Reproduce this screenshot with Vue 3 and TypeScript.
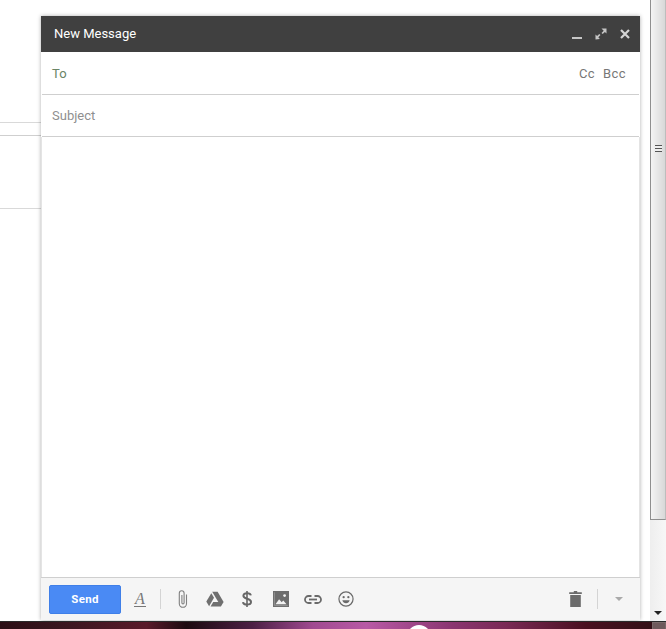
<script setup lang="ts">
const tools = ['paperclip', 'drive', 'dollar', 'photo', 'link', 'smile']
</script>

<template>
  <div class="page">
    <div class="stage">
      <div class="behind">
        <div class="rule rule-a"></div>
        <div class="rule rule-b"></div>
        <div class="rule rule-c"></div>
      </div>
      <section class="compose">
        <header class="head">
          <span class="title">New Message</span>
          <div class="win-btns">
            <svg width="12" height="12" viewBox="0 0 12 12"><rect x="1" y="9" width="10" height="2" fill="#c6c6c6" /></svg>
            <svg width="12" height="12" viewBox="0 0 12 12" fill="#c6c6c6">
              <path d="M6.5 0.5h5v5l-1.6-1.6-2.2 2.2-1.2-1.2 2.2-2.2z" />
              <path d="M0.5 11.5v-5l1.6 1.6 2.2-2.2 1.2 1.2-2.2 2.2 1.6 1.6z" />
            </svg>
            <svg width="12" height="12" viewBox="0 0 12 12"><path d="M2 2l8 8M10 2l-8 8" stroke="#d4d4d4" stroke-width="2.2" fill="none" /></svg>
          </div>
        </header>
        <div class="row to-row">
          <span class="to">To</span>
          <span class="cc">Cc</span>
          <span class="bcc">Bcc</span>
        </div>
        <div class="row subject-row">
          <span class="subject">Subject</span>
        </div>
        <div class="body"></div>
        <footer class="toolbar">
          <button class="send">Send</button>
          <span class="format">A</span>
          <span class="sep"></span>
          <div class="tools">
            <span v-for="t in tools" :key="t" :class="['tool', 'tool-' + t]">
              <svg v-if="t === 'paperclip'" width="14" height="20" viewBox="0 0 14 20" fill="none" stroke="#808080" stroke-width="1.1">
                <path d="M10.5 5.5v9.2a3.6 3.6 0 0 1-7.2 0V4.2a2.4 2.4 0 0 1 4.8 0v9.6a1.1 1.1 0 0 1-2.2 0V6" />
              </svg>
              <svg v-else-if="t === 'drive'" width="18" height="16" viewBox="0 0 18 16" fill="#6f6f6f">
                <path d="M6.2 0.8h5.4l6 10.2h-5.3z" />
                <path d="M5.3 2.2l2.7 4.6-4.9 8.4-2.8-4.6z" />
                <path d="M7.2 11h10.4l-2.7 4.4H4.6z" />
              </svg>
              <svg v-else-if="t === 'dollar'" width="12" height="18" viewBox="0 0 12 18" fill="none" stroke="#666" stroke-width="2">
                <path d="M6 1v16" stroke-width="1.6" />
                <path d="M9.8 5.4C9.6 4 8.2 3.3 6 3.3 3.8 3.3 2.4 4.2 2.4 5.8c0 3.8 7.6 2.2 7.6 6.2C10 13.6 8.3 14.6 6 14.6c-2.3 0-3.8-.9-4-2.5" />
              </svg>
              <svg v-else-if="t === 'photo'" width="16" height="16" viewBox="0 0 16 16">
                <path d="M0 0h16v16H0z" fill="#6d6d6d" />
                <path d="M1.3 1.3h.1v13.3h13.3" fill="none" stroke="#9a9a9a" stroke-width="0.8" />
                <circle cx="11.6" cy="4.6" r="1.4" fill="#f2f2f2" />
                <path d="M2.5 13.2l3.6-5 2.6 3 1.6-1.7 3.2 3.7z" fill="#f2f2f2" />
              </svg>
              <svg v-else-if="t === 'link'" width="18" height="9" viewBox="0 0 18 9" fill="none" stroke="#6a6a6a" stroke-width="1.8">
                <path d="M7.5 1H4.5a3.5 3.5 0 0 0 0 7h3" />
                <path d="M10.5 1h3a3.5 3.5 0 0 1 0 7h-3" />
                <path d="M5 4.5h8" />
              </svg>
              <svg v-else width="16" height="16" viewBox="0 0 17 17">
                <circle cx="8.5" cy="8.5" r="7.5" fill="none" stroke="#6a6a6a" stroke-width="1.3" />
                <circle cx="6" cy="6.6" r="1.2" fill="#6a6a6a" />
                <circle cx="11" cy="6.6" r="1.2" fill="#6a6a6a" />
                <path d="M4.6 9.8h7.8c-.5 2-2 3.2-3.9 3.2s-3.4-1.2-3.9-3.2z" fill="#6a6a6a" />
              </svg>
            </span>
          </div>
          <svg class="trash" width="13" height="16" viewBox="0 0 13 16" fill="#6b6b6b">
            <path d="M4.8 0h3.4v1.3h4.6v1.8H.2V1.3h4.6z" />
            <path d="M1.2 4h10.6v12H1.2z" />
          </svg>
          <span class="sep sep-right"></span>
          <span class="more"></span>
        </footer>
      </section>
      <div class="gutter"></div>
      <aside class="scrollbar">
        <div class="thumb"><span class="grip"></span></div>
        <span class="down"></span>
      </aside>
    </div>
    <div class="taskbar">
      <span class="orb"></span>
      <span class="tray"></span>
    </div>
  </div>
</template>

<style scoped>
.page {
  width: 666px;
  height: 629px;
  overflow: hidden;
  background: #fff;
  font-family: Roboto, "Liberation Sans", sans-serif;
  display: flex;
  flex-direction: column;
}
.stage {
  flex: 0 0 621px;
  display: flex;
  position: relative;
}
.behind {
  flex: 0 0 41px;
  display: flex;
  flex-direction: column;
}
.rule { height: 1px; background: #d9d9d9; }
.rule-a { margin-top: 122px; }
.rule-b { margin-top: 12px; background: #cfcfcf; }
.rule-c { margin-top: 72px; }
.compose {
  flex: 0 0 599px;
  height: 604px;
  margin-top: 16px;
  display: flex;
  flex-direction: column;
  box-shadow: 0 0 4px rgba(0, 0, 0, 0.32);
  background: #fff;
}
.head {
  flex: 0 0 36px;
  background: #404040;
  display: flex;
  align-items: center;
  justify-content: space-between;
  padding: 0 9px 2px 13px;
  box-sizing: border-box;
}
.title { color: #fff; font-size: 13px; }
.win-btns { display: flex; gap: 12px; align-items: center; padding-top: 2px; }
.row {
  display: flex;
  align-items: center;
  margin-left: 1px;
  margin-right: 1px;
  border-bottom: 1px solid #cfcfcf;
  padding: 0 13px 0 10px;
  font-size: 13px;
  box-sizing: border-box;
}
.to-row { flex: 0 0 43px; }
.subject-row { flex: 0 0 42px; }
.to { color: #6a8566; flex: 1; }
.cc { color: #777; margin-right: 8px; letter-spacing: 0.4px; }
.bcc { color: #777; letter-spacing: 0.4px; }
.subject { color: #8f8f8f; }
.body { flex: 1; border-left: 1px solid #e4e4e4; border-right: 1px solid #e4e4e4; }
.toolbar {
  flex: 0 0 43px;
  box-sizing: border-box;
  background: #f5f5f5;
  border-top: 1px solid #cfcfcf;
  display: flex;
  align-items: center;
  padding: 0 14px 0 8px;
}
.send {
  width: 72px;
  height: 29px;
  padding: 0;
  border: 1px solid #3f7fe8;
  border-radius: 2px;
  background: #4a8af4;
  color: #fff;
  font-family: inherit;
  font-size: 11.5px;
  font-weight: 700;
  letter-spacing: 0.3px;
}
.format {
  margin-left: 13px;
  width: 12px;
  font-family: "Liberation Serif", serif;
  font-style: italic;
  font-size: 16px;
  line-height: 15px;
  color: #777;
  border-bottom: 1px solid #777;
  text-align: center;
}
.sep { width: 1px; height: 20px; background: #d4d4d4; margin-left: 14px; }
.tools { display: flex; align-items: center; margin-left: 4px; flex: 1; }
.tool { display: flex; align-items: center; justify-content: center; box-sizing: border-box; width: 33px; height: 20px; }
.tool-paperclip { padding-left: 2px; }
.tool-dollar { margin-left: -1px; }
.tool-photo { margin-left: 1px; }
.tool-link { margin-left: -1px; }
.trash { margin-right: 15px; }
.sep-right { margin-left: 0; margin-right: 17px; }
.more {
  width: 0;
  height: 0;
  margin-right: 3px;
  border: 4px solid transparent;
  border-top: 4px solid #aaa;
  border-bottom: 0;
}
.gutter { flex: 0 0 10px; }
.scrollbar {
  flex: 0 0 16px;
  background: linear-gradient(90deg, #eee, #f7f7f7);
  display: flex;
  flex-direction: column;
  align-items: center;
  justify-content: space-between;
  padding-bottom: 6px;
  box-sizing: border-box;
}
.thumb {
  width: 16px;
  height: 520px;
  box-sizing: border-box;
  border-left: 1px solid #8f8f8f;
  border-right: 1px solid #bdbdbd;
  border-bottom: 1px solid #8f8f8f;
  background: linear-gradient(90deg, #f4f4f4, #d8d8d8);
  display: flex;
  justify-content: center;
  padding-top: 145px;
}
.grip {
  width: 7px;
  height: 7px;
  background: repeating-linear-gradient(180deg, #555 0 1px, #eee 1px 3px);
}
.down {
  width: 0;
  height: 0;
  border: 4px solid transparent;
  border-top: 4px solid #222;
  border-bottom: 0;
}
.taskbar {
  flex: 1;
  position: relative;
  overflow: hidden;
  border-top: 1px solid #2a2a2a;
  background: linear-gradient(90deg, #2c0f16 0, #3c1620 10%, #5a1a2a 22%, #1c0a10 28%, #4d2045 38%, #a04a90 47%, #b85aa5 55%, #8a3570 68%, #7a2a55 76%, #4a1020 88%, #301015 100%);
}
.orb {
  position: absolute;
  left: 407px;
  top: 3px;
  width: 24px;
  height: 24px;
  border-radius: 50%;
  background: radial-gradient(circle at 50% 50%, #2a8fd8 0 6px, #fff 7px);
}
.tray {
  position: absolute;
  right: 0;
  top: 0;
  width: 14px;
  height: 8px;
  box-sizing: border-box;
  border: 1px solid #7a6a6a;
  background: #6f5a5c;
}
</style>
